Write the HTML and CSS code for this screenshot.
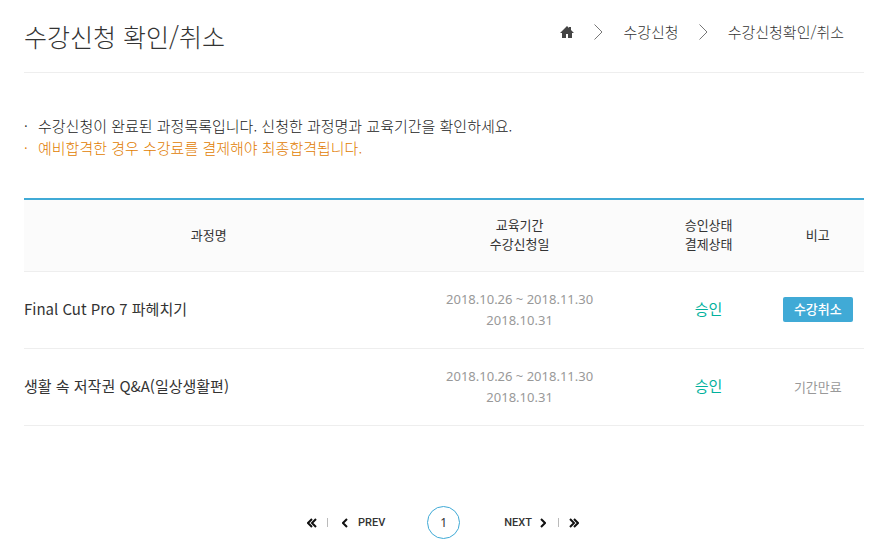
FILE: index.html
```html
<!DOCTYPE html>
<html lang="ko">
<head>
<meta charset="utf-8">
<title>수강신청 확인/취소</title>
<link rel="stylesheet" href="styles.css">
</head>
<body>
<main class="page">
  <header class="page-head">
    <h1 class="title">수강신청 확인/취소</h1>
    <nav class="crumbs" aria-label="breadcrumb">
      <a class="home" href="#" aria-label="홈"><svg width="14" height="12" viewBox="0 0 14 12"><path d="M7 0 0 7h2v5h4V8h2v4h4V7h2L11 4V1H9v1z" fill="#444"/></svg></a>
      <svg class="sep" width="9" height="16" viewBox="0 0 9 16"><path d="M.5 .5 8 8 .5 15.5" fill="none" stroke="#777"/></svg>
      <a href="#">수강신청</a>
      <svg class="sep" width="9" height="16" viewBox="0 0 9 16"><path d="M.5 .5 8 8 .5 15.5" fill="none" stroke="#777"/></svg>
      <a href="#">수강신청확인/취소</a>
    </nav>
  </header>

  <ul class="notes">
    <li>수강신청이 완료된 과정목록입니다. 신청한 과정명과 교육기간을 확인하세요.</li>
    <li class="warn">예비합격한 경우 수강료를 결제해야 최종합격됩니다.</li>
  </ul>

  <table class="courses">
    <thead>
      <tr>
        <th class="col-name" scope="col">과정명</th>
        <th class="col-term" scope="col">교육기간<br>수강신청일</th>
        <th class="col-state" scope="col">승인상태<br>결제상태</th>
        <th class="col-note" scope="col">비고</th>
      </tr>
    </thead>
    <tbody>
      <tr>
        <td class="name">Final Cut Pro 7 파헤치기</td>
        <td class="term">2018.10.26 ~ 2018.11.30<br>2018.10.31</td>
        <td class="state">승인</td>
        <td class="note"><button class="cancel" type="button">수강취소</button></td>
      </tr>
      <tr>
        <td class="name">생활 속 저작권 Q&amp;A(일상생활편)</td>
        <td class="term">2018.10.26 ~ 2018.11.30<br>2018.10.31</td>
        <td class="state">승인</td>
        <td class="note">기간만료</td>
      </tr>
    </tbody>
  </table>

  <nav class="pager" aria-label="pagination">
    <div class="side">
      <a href="#" aria-label="첫 페이지"><svg width="10" height="10" viewBox="0 0 10 10"><path d="M5 1 1 5l4 4M9 1 5 5l4 4" /></svg></a>
      <span class="bar"></span>
      <a class="step" href="#"><svg width="6" height="10" viewBox="0 0 6 10"><path d="M5 1 1 5l4 4"/></svg>PREV</a>
    </div>
    <a class="current" href="#" aria-current="page">1</a>
    <div class="side">
      <a class="step" href="#">NEXT<svg width="6" height="10" viewBox="0 0 6 10"><path d="m1 1 4 4-4 4"/></svg></a>
      <span class="bar"></span>
      <a href="#" aria-label="마지막 페이지"><svg width="10" height="10" viewBox="0 0 10 10"><path d="m1 1 4 4-4 4M5 1l4 4-4 4"/></svg></a>
    </div>
  </nav>
</main>
</body>
</html>
```
FILE: styles.css
```css
* { box-sizing: border-box; }
body {
  margin: 0;
  background: #fff;
  color: #333;
  font-family: "Noto Sans CJK KR", "Noto Sans", sans-serif;
  font-size: 15px;
}
a { color: inherit; text-decoration: none; }
svg { display: block; }
.page { padding: 0 14px 0 24px; }
.page-head {
  display: flex;
  justify-content: space-between;
  align-items: flex-start;
  height: 73px;
  padding: 16px 20px 0 0;
  border-bottom: 1px solid #eee;
}
.title {
  margin: 0;
  font-size: 25px;
  font-weight: 300;
  line-height: 40px;
}
.crumbs {
  display: flex;
  align-items: center;
  gap: 20px;
  font-weight: 300;
  line-height: 32px;
}
.notes {
  margin: 42px 0 39px;
  padding: 0;
  color: #222;
  list-style: none;
  font-weight: 300;
  line-height: 22px;
}
.notes li { display: flex; }
.notes li::before { content: "·"; width: 14px; }
.notes .warn { color: #e17c00; }
.courses {
  width: 100%;
  table-layout: fixed;
  border-collapse: separate;
  border-spacing: 0;
  border-top: 2px solid #40aad6;
}
.courses th, .courses td { padding: 0 0 3px; border-bottom: 1px solid #eee; text-align: center; }
.courses th { height: 72px; background: #fbfbfb; font-size: 13px; font-weight: 400; line-height: 19px; }
.courses td { height: 77px; line-height: 21px; }
.courses .col-name { width: 44%; }
.courses .col-term { width: 30%; }
.courses .col-state { width: 15%; }
.courses .col-note { width: 11%; }
.courses .name { text-align: left; }
.term, .note { color: #999; font-size: 13px; }
.courses .term { padding: 0; font-family: "Noto Sans", sans-serif; }
.courses .note { padding: 0 0 2px; }
.state { color: #00b19d; }
.cancel {
  width: 70px;
  height: 25px;
  padding: 0 0 2px;
  border: 0;
  border-radius: 2px;
  background: #40aad6;
  color: #fff;
  font: 500 13px/23px "Noto Sans CJK KR", sans-serif;
  vertical-align: middle;
}
.pager {
  display: flex;
  justify-content: center;
  align-items: center;
  gap: 42px;
  margin-top: 80px;
  padding-right: 2px;
  font-family: Roboto, sans-serif;
  font-size: 11px;
  font-weight: 500;
}
.pager path { fill: none; stroke: #111; stroke-width: 2; }
.side { display: flex; align-items: center; gap: 10px; }
.step { display: flex; align-items: center; gap: 10px; }
.bar { width: 1px; height: 9px; background: #bbb; }
.side .step:last-child { padding-left: 4px; }
.side .step:first-child { gap: 8px; padding: 0 2px; }
.current {
  width: 33px;
  height: 33px;
  border: 1px solid #40aad6;
  border-radius: 50%;
  font: 400 12px/31px "Noto Sans", sans-serif;
  text-align: center;
}
```
